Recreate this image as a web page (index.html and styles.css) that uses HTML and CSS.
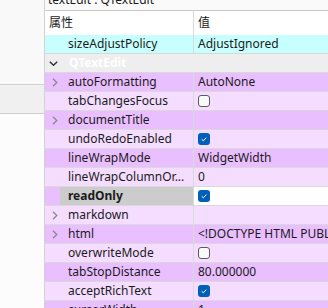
FILE: index.html
```html
<!DOCTYPE html>
<html lang="zh-CN">
<head>
    <meta charset="UTF-8">
    <title>Property Editor</title>
    <link rel="stylesheet" href="styles.css">
</head>
<body>
    <div class="window">
        <div class="side">
            <div class="side-top"></div>
            <div class="side-mid"></div>
            <div class="side-bottom"></div>
        </div>
        <div class="editor">
            <div class="title"><span>textEdit : QTextEdit</span></div>
            <div class="header">
                <div class="head-name">属性</div>
                <div class="head-value">值</div>
            </div>

            <div class="row blue">
                <div class="branch"></div>
                <div class="name">sizeAdjustPolicy</div>
                <div class="value">AdjustIgnored</div>
            </div>

            <div class="row category">
                <div class="branch">
                    <svg width="9" height="5" viewBox="0 0 9 5"><path d="M0.8 0.8 L4.5 4.2 L8.2 0.8" fill="none" stroke="#333" stroke-width="1.5"/></svg>
                </div>
                <div class="name">QTextEdit</div>
            </div>

            <div class="row dark">
                <div class="branch"><svg class="arrow" width="6" height="9" viewBox="0 0 6 9"><path d="M1 0.8 L4.8 4.5 L1 8.2" fill="none" stroke="#8a8a8a" stroke-width="1.3"/></svg></div>
                <div class="name">autoFormatting</div>
                <div class="value">AutoNone</div>
            </div>
            <div class="row light">
                <div class="branch"></div>
                <div class="name">tabChangesFocus</div>
                <div class="value"><span class="check"></span></div>
            </div>
            <div class="row dark">
                <div class="branch"><svg class="arrow" width="6" height="9" viewBox="0 0 6 9"><path d="M1 0.8 L4.8 4.5 L1 8.2" fill="none" stroke="#8a8a8a" stroke-width="1.3"/></svg></div>
                <div class="name">documentTitle</div>
                <div class="value"></div>
            </div>
            <div class="row light">
                <div class="branch"></div>
                <div class="name">undoRedoEnabled</div>
                <div class="value"><span class="check on"><svg width="12" height="12" viewBox="0 0 12 12"><path d="M3.6 6.2 L5.3 7.8 L8.4 4.6" fill="none" stroke="#fff" stroke-width="1"/></svg></span></div>
            </div>
            <div class="row dark">
                <div class="branch"></div>
                <div class="name">lineWrapMode</div>
                <div class="value">WidgetWidth</div>
            </div>
            <div class="row light">
                <div class="branch"></div>
                <div class="name">lineWrapColumnOr...</div>
                <div class="value">0</div>
            </div>
            <div class="row dark current">
                <div class="branch"></div>
                <div class="name bold">readOnly</div>
                <div class="value"><span class="check on"><svg width="12" height="12" viewBox="0 0 12 12"><path d="M3.6 6.2 L5.3 7.8 L8.4 4.6" fill="none" stroke="#fff" stroke-width="1"/></svg></span></div>
            </div>
            <div class="row light">
                <div class="branch"><svg class="arrow" width="6" height="9" viewBox="0 0 6 9"><path d="M1 0.8 L4.8 4.5 L1 8.2" fill="none" stroke="#8a8a8a" stroke-width="1.3"/></svg></div>
                <div class="name">markdown</div>
                <div class="value"></div>
            </div>
            <div class="row dark">
                <div class="branch"><svg class="arrow" width="6" height="9" viewBox="0 0 6 9"><path d="M1 0.8 L4.8 4.5 L1 8.2" fill="none" stroke="#8a8a8a" stroke-width="1.3"/></svg></div>
                <div class="name">html</div>
                <div class="value">&lt;!DOCTYPE HTML PUBLIC "-//W3C//DTD HTML 4.0//EN"</div>
            </div>
            <div class="row light">
                <div class="branch"></div>
                <div class="name">overwriteMode</div>
                <div class="value"><span class="check"></span></div>
            </div>
            <div class="row dark">
                <div class="branch"></div>
                <div class="name">tabStopDistance</div>
                <div class="value">80.000000</div>
            </div>
            <div class="row light">
                <div class="branch"></div>
                <div class="name">acceptRichText</div>
                <div class="value"><span class="check on"><svg width="12" height="12" viewBox="0 0 12 12"><path d="M3.6 6.2 L5.3 7.8 L8.4 4.6" fill="none" stroke="#fff" stroke-width="1"/></svg></span></div>
            </div>
            <div class="row dark">
                <div class="branch"></div>
                <div class="name">cursorWidth</div>
                <div class="value">1</div>
            </div>
        </div>
    </div>
</body>
</html>
```

FILE: styles.css
```css
* {
    box-sizing: border-box;
}
body {
    margin: 0;
    font-family: "Noto Sans", "Noto Sans CJK SC", sans-serif;
    font-size: 12px;
    color: #1b1b1b;
    background-color: #fafafa;
}
.window {
    display: flex;
    width: 328px;
    height: 308px;
    overflow: hidden;
}

/* left dock strip */
.side {
    width: 45px;
    flex-shrink: 0;
    display: flex;
    flex-direction: column;
    border-right: 1px solid #d2d2d2;
}
.side-top {
    height: 85px;
    flex-shrink: 0;
    background-color: #f9f9f9;
    border-bottom: 1px solid #cfcfcf;
}
.side-mid {
    height: 29px;
    flex-shrink: 0;
    background-color: #f0f0f0;
    border-bottom: 1px solid #cfcfcf;
}
.side-bottom {
    flex: 1;
    background-color: #fcfcfc;
}

/* property editor */
.editor {
    flex: 1;
    min-width: 0;
    display: flex;
    flex-direction: column;
}
.title {
    height: 11px;
    flex-shrink: 0;
    display: flex;
    align-items: flex-end;
    padding-left: 3px;
    overflow: hidden;
    background-color: #fafafa;
    border-bottom: 1px solid #c9c9c9;
}
.title span {
    line-height: 12px;
    margin-bottom: 4px;
    white-space: nowrap;
}
.header {
    height: 24px;
    flex-shrink: 0;
    display: grid;
    grid-template-columns: 149px 1fr;
    background-color: #ffffff;
}
.head-name {
    padding-left: 4px;
    line-height: 24px;
    border-right: 1px solid #d9d9d9;
}
.head-value {
    padding-left: 4px;
    line-height: 24px;
}
.row {
    height: 19px;
    flex-shrink: 0;
    display: grid;
    grid-template-columns: 15px 134px 1fr;
    border-bottom: 1px solid #d9d9d9;
}
.row.blue {
    background-color: #c7ffff;
}
.row.dark {
    background-color: #eabfff;
}
.row.light {
    background-color: #f4ddff;
}
.row.category {
    background-color: #eeeeee;
    color: #ffffff;
    font-weight: bold;
}
.branch {
    display: flex;
    align-items: center;
    padding-left: 4px;
}
.branch .arrow {
    margin-left: 3px;
}
.name {
    padding-left: 8px;
    line-height: 18px;
    white-space: nowrap;
    overflow: hidden;
    border-right: 1px solid #d9d9d9;
}
.category .name {
    border-right: none;
    padding-left: 9px;
}
.name.bold {
    font-weight: bold;
}
.current .name {
    background-color: #cccccc;
}
.current .value {
    background-color: #ffffff;
}
.value {
    padding-left: 4px;
    line-height: 18px;
    white-space: nowrap;
    overflow: hidden;
    display: flex;
    align-items: center;
}
.check {
    display: block;
    width: 12px;
    height: 12px;
    border: 1px solid #5c5c5c;
    border-radius: 3px;
    background-color: #f9f9f9;
}
.check.on {
    border: none;
    background-color: #005fb8;
}
.check svg {
    display: block;
}
```
